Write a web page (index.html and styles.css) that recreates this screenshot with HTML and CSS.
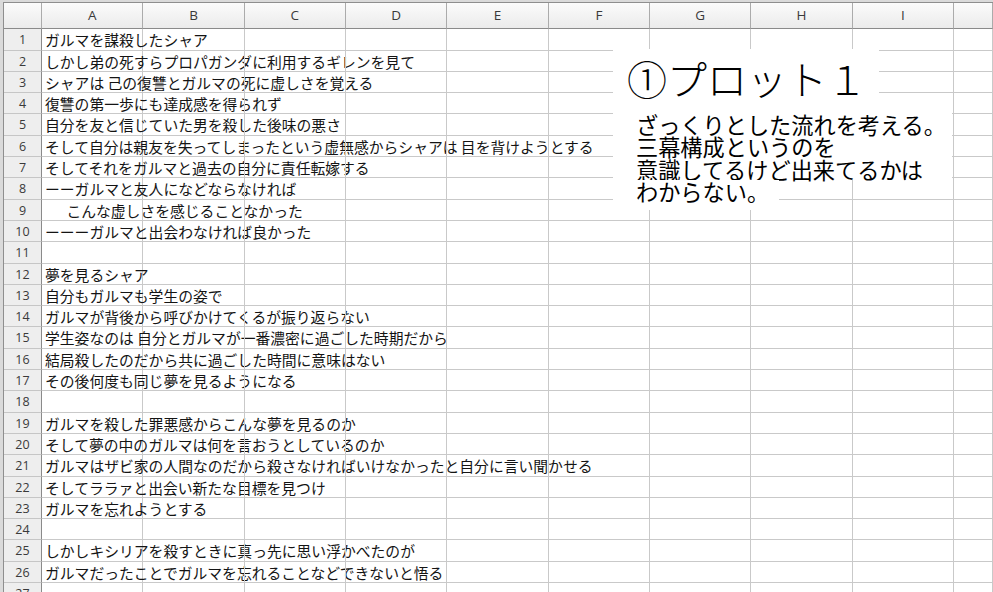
FILE: index.html
```html
<!DOCTYPE html>
<html>
	<head>
		<meta charset="utf-8" />
		<title>プロット</title>
		<link rel="stylesheet" href="styles.css">
	</head>
	<body>
		<div class="wrap">
			<div class="sheet" id="sheet"></div>
			<div class="note">
				<div class="note-title">①プロット１</div>
				<div class="note-body">ざっくりとした流れを考える。<br>三幕構成というのを<br>意識してるけど出来てるかは</div>
				<div class="note-tail">わからない。</div>
			</div>
		</div>
		<script>
			var aData=[
				"ガルマを謀殺したシャア",
				"しかし弟の死すらプロパガンダに利用するギレンを見て",
				"シャアは 己の復讐とガルマの死に虚しさを覚える",
				"復讐の第一歩にも達成感を得られず",
				"自分を友と信じていた男を殺した後味の悪さ",
				"そして自分は親友を失ってしまったという虚無感からシャアは 目を背けようとする",
				"そしてそれをガルマと過去の自分に責任転嫁する",
				"ーーガルマと友人になどならなければ",
				"　  こんな虚しさを感じることなかった",
				"ーーーガルマと出会わなければ良かった",
				"",
				"夢を見るシャア",
				"自分もガルマも学生の姿で",
				"ガルマが背後から呼びかけてくるが振り返らない",
				"学生姿なのは 自分とガルマが一番濃密に過ごした時期だから",
				"結局殺したのだから共に過ごした時間に意味はない",
				"その後何度も同じ夢を見るようになる",
				"",
				"ガルマを殺した罪悪感からこんな夢を見るのか",
				"そして夢の中のガルマは何を言おうとしているのか",
				"ガルマはザビ家の人間なのだから殺さなければいけなかったと自分に言い聞かせる",
				"そしてララァと出会い新たな目標を見つけ",
				"ガルマを忘れようとする",
				"",
				"しかしキシリアを殺すときに真っ先に思い浮かべたのが",
				"ガルマだったことでガルマを忘れることなどできないと悟る",
				""
			];
			var aCols=['A','B','C','D','E','F','G','H','I',''];

			var sHtml='<div class="corner"></div>';
			for(var i=0;i<aCols.length;i++){
				sHtml+='<div class="col-head">'+aCols[i]+'</div>';
			}
			for(var i=0;i<aData.length;i++){
				sHtml+='<div class="row-head">'+(i+1)+'</div>';
				sHtml+='<div class="cell text">'+aData[i]+'</div>';
				for(var j=1;j<aCols.length;j++){
					sHtml+='<div class="cell"></div>';
				}
			}
			document.getElementById('sheet').innerHTML=sHtml;
		</script>
	</body>
</html>
```

FILE: styles.css
```css
*{margin: 0;padding: 0;}
html,body{
	width: 100%;
	height: 100%;
	overflow: hidden;
}
body{
	background: #dadada;
	font-family: "Noto Sans CJK JP", sans-serif;
}
.wrap{
	position: relative;
	height: 100%;
	padding: 2px 0 0 3px;
	box-sizing: border-box;
}
.sheet{
	display: grid;
	grid-template-columns: 38px repeat(9, 101.35px) 1fr;
	grid-template-rows: 26.3px;
	grid-auto-rows: 21.3px;
	background: #fff;
	border-top: 1px solid #8e8e8e;
	border-left: 1px solid #8e8e8e;
}
.corner,
.col-head{
	background: linear-gradient(#fbfbfb, #ebebeb);
	border-right: 1px solid #ababab;
	border-bottom: 1px solid #8a8a8a;
	box-sizing: border-box;
}
.col-head{
	font-family: "Open Sans", "Liberation Sans", sans-serif;
	font-size: 13.5px;
	color: #3a3a3a;
	text-align: center;
	line-height: 25px;
}
.row-head{
	background: #eeeeee;
	border-right: 1px solid #8a8a8a;
	border-bottom: 1px solid #c6c6c6;
	box-sizing: border-box;
	font-family: "Open Sans", "Liberation Sans", sans-serif;
	font-size: 12.5px;
	color: #3a3a3a;
	text-align: center;
	line-height: 21px;
}
.cell{
	border-right: 1px solid #c9c9c9;
	border-bottom: 1px solid #c9c9c9;
	box-sizing: border-box;
}
.text{
	padding: 1px 0 0 3px;
	font-size: 14.8px;
	line-height: 20px;
	color: #141414;
	white-space: pre;
	overflow: visible;
}

/* 右上のメモ */
.note{
	position: absolute;
	left: 613px;
	top: 49px;
	display: flex;
	flex-direction: column;
	align-items: flex-start;
	color: #000;
}
.note-title{
	background: #fff;
	height: 59px;
	padding: 0 12px 0 14px;
	font-size: 40px;
	line-height: 59px;
	font-weight: 300;
}
.note-body,
.note-tail{
	background: #fff;
	font-size: 22.2px;
	line-height: 22.3px;
	padding-left: 23px;
}
.note-body{
	width: 339px;
	box-sizing: border-box;
	padding-top: 5px;
}
.note-tail{
	padding-right: 10px;
	padding-bottom: 8px;
}
```
